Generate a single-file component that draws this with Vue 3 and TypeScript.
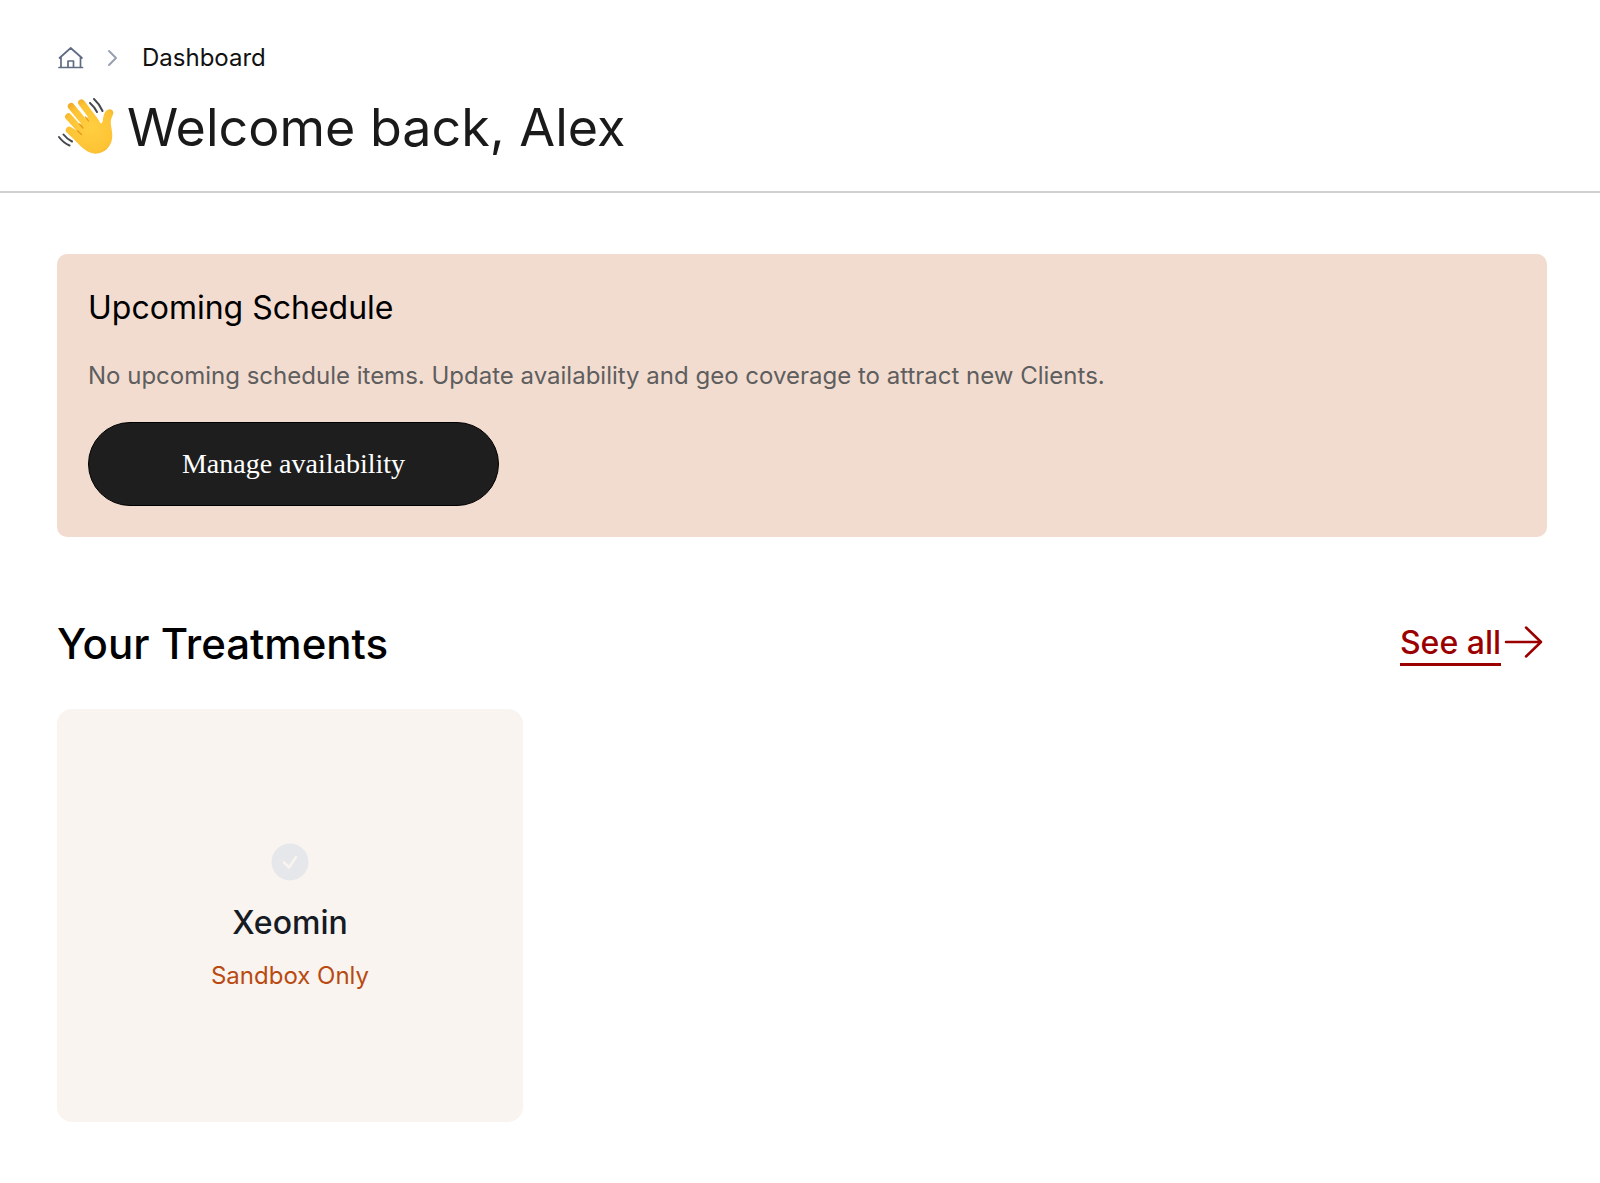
<script setup lang="ts">
interface Treatment {
  name: string
  status: string
}

const userName: string = 'Alex'
const treatments: Treatment[] = [{ name: 'Xeomin', status: 'Sandbox Only' }]
</script>

<template>
  <div class="page">
    <header class="page-header">
      <nav class="breadcrumb" aria-label="Breadcrumb">
        <a href="#" class="home" aria-label="Home">
          <svg width="28" height="24" viewBox="0 0 28 24" fill="none" stroke="#5f6b80" stroke-width="1.700" stroke-linecap="round" stroke-linejoin="round">
            <path d="M2 21.500h23.500M4 21.500V11M23.500 21.500V11M2.500 12 13.700 2l11.300 10M11 21.500V15h5.500v6.500" />
          </svg>
        </a>
        <svg class="chevron" width="12" height="18" viewBox="0 0 12 18" fill="none" stroke="#9aa0b0" stroke-width="2" stroke-linecap="round" stroke-linejoin="round">
          <path d="M2 2l7 7-7 7" />
        </svg>
        <a href="#" class="crumb" aria-current="page">Dashboard</a>
      </nav>
      <h1 class="welcome">
        <svg class="wave" width="60" height="60" viewBox="0 0 60 60" role="img" aria-label="Waving hand">
          <defs>
            <radialGradient id="skin" gradientUnits="userSpaceOnUse" cx="34" cy="30" r="34">
              <stop offset="0" stop-color="#ffcf40" />
              <stop offset="0.700" stop-color="#fdc335" />
              <stop offset="1" stop-color="#eda523" />
            </radialGradient>
          </defs>
          <g fill="none" stroke="url(#skin)" stroke-linecap="round" stroke-width="6.800">
            <path d="M24.500 4.800 39 24" />
            <path d="M14.200 8.300 32 30" />
            <path d="M11.500 18.700 28 37" />
            <path d="M12.200 32 30 46" />
          </g>
          <path
            fill="url(#skin)"
            d="M29.500 19.500 38 17.500C40.500 21 43 26 44.500 25.200C46.300 24 45.500 20.500 47 16.500C48.200 13.200 50.300 11 53 11.300C55.800 11.700 57 14 56 16.500C54.800 19.500 53.500 21.500 53.800 25.500C54.200 31 56 34.500 55 41C54 48.500 47.500 55 40 55.600C34 56 29 53 24.500 49L10 34.500 16 30.500 21 33 23.500 26.500Z"
          />
          <path fill="none" stroke="#e0981f" stroke-width="1.200" stroke-linecap="round" d="M28.500 19 31.500 23M22.500 26 26 30M20.500 32.800 24.500 36.500" />
          <path fill="none" stroke="#45484d" stroke-width="2" stroke-linecap="round" d="M33 5Q37.500 9 40 14M37 1Q42.500 6 45.500 13M6.500 36.500Q10 41 15 43.500M2 39Q6.500 45 12.500 47.500" />
        </svg>
        <span>Welcome back, {{ userName }}</span>
      </h1>
    </header>

    <main class="content">
      <section class="schedule" aria-labelledby="schedule-title">
        <h2 id="schedule-title" class="schedule-title">Upcoming Schedule</h2>
        <p class="schedule-text">No upcoming schedule items. Update availability and geo coverage to attract new Clients.</p>
        <button type="button" class="manage">Manage availability</button>
      </section>

      <section aria-labelledby="treatments-title">
        <div class="section-head">
          <h2 id="treatments-title" class="section-title">Your Treatments</h2>
          <a href="#" class="see-all">
            <span class="see-all-label">See all</span>
            <svg class="arrow" width="40" height="32" viewBox="0 0 40 32" fill="none" stroke="#9b0000" stroke-width="2.500" stroke-linecap="round" stroke-linejoin="round">
              <path d="M3 16h35M23 1.500L38 16 23 30.500" />
            </svg>
          </a>
        </div>
        <ul class="treatments">
          <li v-for="treatment in treatments" :key="treatment.name" class="treatment">
            <svg width="38" height="38" viewBox="0 0 38 38" aria-hidden="true">
              <circle cx="19" cy="19" r="18.500" fill="#e5e7eb" />
              <path d="M13 19.500l5 5 7-10.500" fill="none" stroke="#f9f4f0" stroke-width="2.600" stroke-linecap="round" stroke-linejoin="round" />
            </svg>
            <h3 class="treatment-name">{{ treatment.name }}</h3>
            <p class="treatment-status">{{ treatment.status }}</p>
          </li>
        </ul>
      </section>
    </main>
  </div>
</template>

<style>
body {
  margin: 0;
  background: #fff;
}
</style>

<style scoped>
.page {
  font-family: Inter, "Liberation Sans", sans-serif;
  color: #000;
}

h1,
h2,
h3,
p,
ul {
  margin: 0;
  padding: 0;
}

a {
  color: inherit;
  text-decoration: none;
}

svg {
  display: block;
  flex: none;
}

.page-header {
  padding: 42px 53px 31px 57px;
  border-bottom: 2px solid #d0d0d0;
}

.breadcrumb {
  display: flex;
  align-items: center;
  height: 32px;
}

.chevron {
  margin: 0 23px 0 22px;
}

.crumb {
  font-size: 24px;
  line-height: 32px;
  color: #111;
}

.welcome {
  display: flex;
  align-items: center;
  gap: 10px;
  margin-top: 22px;
  font-size: 52px;
  line-height: 64px;
  font-weight: 400;
  color: #1a1a1a;
}

.content {
  padding: 61px 53px 61px 57px;
}

.schedule {
  padding: 32px 31px 31px;
  border-radius: 10px;
  background: #f2dcd0;
}

.schedule-title {
  font-size: 32px;
  line-height: 44px;
  font-weight: 400;
}

.schedule-text {
  margin-top: 30px;
  font-size: 24px;
  line-height: 32px;
  color: #5e5e5e;
}

.manage {
  display: block;
  width: 411px;
  height: 84px;
  margin-top: 30px;
  padding: 0;
  border: 1px solid #000;
  border-radius: 42px;
  background: #1e1e1e;
  color: #fff;
  font-family: "Liberation Serif", serif;
  font-size: 28px;
  line-height: 32px;
}

.section-head {
  display: flex;
  align-items: center;
  justify-content: space-between;
  margin-top: 77px;
}

.section-title {
  font-size: 42px;
  line-height: 60px;
  font-weight: 500;
}

.see-all {
  display: flex;
  align-items: center;
  gap: 2px;
  padding-right: 4px;
  color: #9b0000;
}

.see-all-label {
  border-bottom: 3px solid #9b0000;
  font-size: 32px;
  line-height: 40px;
  font-weight: 500;
}

.arrow {
  margin-bottom: 4px;
}

.treatments {
  display: grid;
  grid-template-columns: repeat(3, 1fr);
  gap: 46px;
  margin-top: 35px;
  list-style: none;
}

.treatment {
  display: flex;
  flex-direction: column;
  align-items: center;
  padding: 134px 20px 130px;
  border-radius: 15px;
  background: #f9f4f0;
}

.treatment-name {
  margin-top: 20px;
  font-size: 32px;
  line-height: 44px;
  font-weight: 500;
  color: #161b24;
}

.treatment-status {
  margin-top: 15px;
  font-size: 24px;
  line-height: 32px;
  color: #b84a10;
}
</style>
